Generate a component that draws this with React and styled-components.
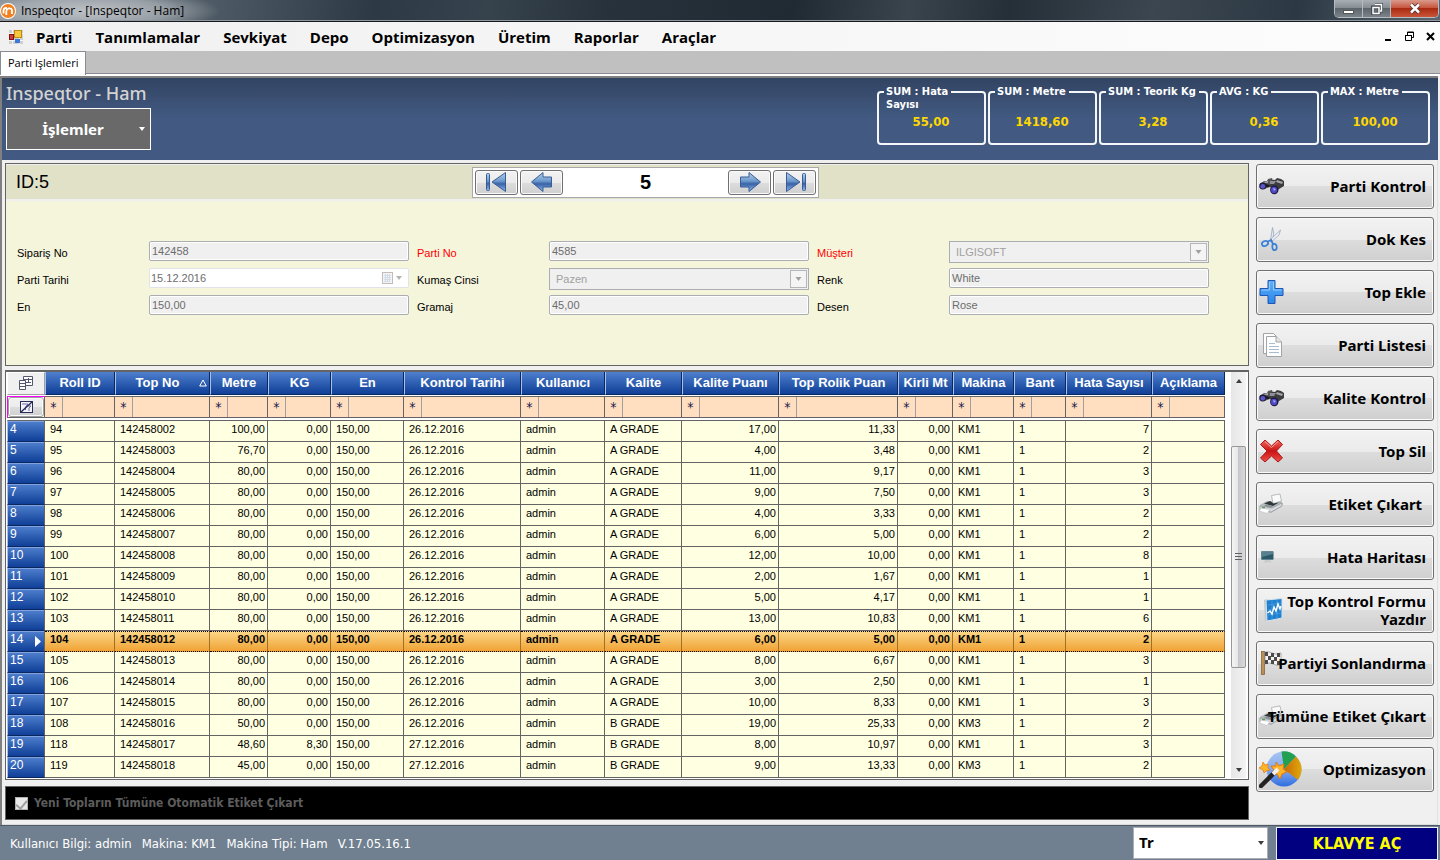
import React from 'react'
import styled, { createGlobalStyle, css } from 'styled-components'

const sans = '"Liberation Sans", Arial, sans-serif'
const tahoma = '"DejaVu Sans Condensed", Tahoma, "DejaVu Sans", sans-serif'
const segoe = '"Open Sans", "Segoe UI", sans-serif'
const noto = '"Noto Sans", Tahoma, sans-serif'

const GlobalStyle = createGlobalStyle`
    * { box-sizing: border-box; }
    body {
        margin: 0;
        background: #f0f0f0;
        font-family: ${sans};
        font-size: 11px;
        color: #000;
    }
    button, input, select { font: inherit; margin: 0; }
`

const raised = css`
    border: 1px solid #707070;
    border-radius: 3px;
    background: linear-gradient(#f2f2f2, #ebebeb 50%, #dddddd 50%, #cfcfcf);
    box-shadow: inset 0 0 0 1px #fafafa;
`

const Window = styled.div`
    min-height: 100vh;
    display: flex;
    flex-direction: column;
`

/* ---------- title bar ---------- */

const TitleBar = styled.header`
    height: 22px;
    display: flex;
    align-items: flex-start;
    justify-content: space-between;
    border-bottom: 1px solid #16191d;
    box-shadow: inset 0 -1px #8f979e;
    background:
        radial-gradient(ellipse 130px 22px at 90px 11px, rgba(205, 208, 210, 0.85), rgba(190, 195, 200, 0.6) 60%, transparent),
        linear-gradient(100deg, #7b858d 0%, #4a5661 16%, #2d3945 26%, #36424c 34%, #27323c 42%, #202a33 55%, #39444d 63%, #252f38 70%, #3b4650 80%, #2c3843 90%, #5a6670 100%);
`

const Caption = styled.div`
    display: flex;
    align-items: center;
    gap: 5px;
    height: 21px;
    font-family: ${segoe};
    font-size: 12px;
`

const WindowButtons = styled.div`
    display: flex;
    margin-right: 1px;
    border: 1px solid #b5bbc0;
    border-top: 0;
    border-radius: 0 0 5px 5px;
    overflow: hidden;
`

const WindowButton = styled.button`
    width: ${({ $wide }) => ($wide ? 47 : 28)}px;
    height: 17px;
    padding: 0;
    display: grid;
    place-items: center;
    border: 0;
    border-right: ${({ $wide }) => ($wide ? '0' : '1px solid #b5bbc0')};
    background: ${({ $wide }) => $wide
        ? 'linear-gradient(#d99a8c, #c8573f 45%, #a92a10 50%, #c9553a)'
        : 'linear-gradient(#a9afb4, #868d93 45%, #5d656c 50%, #7c848a)'};
`

/* ---------- menu and tabs ---------- */

const MenuBar = styled.nav`
    height: 29px;
    display: flex;
    align-items: center;
    padding: 0 5px 0 9px;
    background: linear-gradient(90deg, #f0f0f0, #fdfdfd);
`

const MenuItems = styled.div`
    flex: 1;
    display: flex;
    gap: 23px;
    margin-left: 13px;
`

const MenuItem = styled.a`
    color: #000;
    text-decoration: none;
    font-family: ${segoe};
    font-size: 15px;
    font-weight: 700;
    line-height: 24px;
`

const ChildButtons = styled.div`
    display: flex;
    gap: 12px;
`

const ChildButton = styled.button`
    border: 0;
    padding: 0;
    background: none;
    width: 9px;
    height: 11px;
`

const TabStrip = styled.div`
    height: 25px;
    background: linear-gradient(#c0c0c0 22px, #8b8b93 22px, #8b8b93 23px, #fff 23px);
`

const Tab = styled.button`
    height: 24px;
    padding: 0 7px 2px;
    border: 1px solid #8b8b93;
    border-bottom: 0;
    background: #fff;
    font-family: ${segoe};
    font-size: 11px;
`

const Frame = styled.div`
    flex: 1;
    border: solid #808080;
    border-width: 2px 0 0 2px;
    margin-right: 2px;
    display: flex;
    flex-direction: column;
`

/* ---------- blue header ---------- */

const Banner = styled.section`
    height: 82px;
    padding: 0 8px 0 4px;
    display: flex;
    justify-content: space-between;
    background: linear-gradient(#324462, #425a82 50%);
`

const Heading = styled.h1`
    margin: 3px 0 2px;
    color: #d3d3d3;
    font-family: ${noto};
    font-size: 18px;
    font-weight: 500;
    line-height: 25px;
`

const ActionsButton = styled.button`
    width: 145px;
    height: 42px;
    padding: 0 5px 0 0;
    display: flex;
    align-items: center;
    border: 1px solid #fff;
    background: #696969;
    color: #fff;
    font-family: ${noto};
    font-size: 15px;
    font-weight: 700;
    span { flex: 1; }
`

const Stats = styled.div`
    display: flex;
    gap: 2px;
    padding-top: 7px;
`

const Stat = styled.fieldset`
    width: 109px;
    height: 60px;
    margin: 0;
    padding: 0 0 0 5px;
    border: 2px solid #f4f6f8;
    border-radius: 4px;
    color: #fff;
    font-family: ${tahoma};
    font-weight: 700;
    font-size: 11px;
    legend {
        height: 13px;
        padding: 0 3px 0 2px;
        line-height: 13px;
        white-space: pre;
    }
`

const StatValue = styled.output`
    display: block;
    padding: 16px 6px 0 0;
    text-align: center;
    color: #ffd700;
    font-size: 13px;
    line-height: 16px;
`

/* ---------- workspace ---------- */

const Workspace = styled.div`
    flex: 1;
    display: grid;
    grid-template-columns: minmax(0, 1fr) 178px;
    gap: 7px;
    padding: 3px;
    border-right: 1px solid #e0e0e0;
    border-bottom: 1px solid #dcdcdc;
`

const Main = styled.main`
    display: flex;
    flex-direction: column;
`

const FormPanel = styled.section`
    height: 203px;
    border: 1px solid #646464;
    background: #f5f5dc;
`

const RecordBar = styled.div`
    height: 37px;
    display: grid;
    grid-template-columns: 466fr 347px 429fr;
    align-items: center;
    background: #e1e1c8;
    border: solid #f0f0f0;
    border-width: 1px 0 2px;
`

const RecordId = styled.h2`
    margin: 0;
    padding-left: 10px;
    font-size: 18px;
    font-weight: 400;
`

const Navigator = styled.div`
    height: 31px;
    padding: 2px;
    display: flex;
    gap: 2px;
    align-items: center;
    background: #fff;
    border: 1px solid #a9a9ab;
`

const NavButton = styled.button`
    ${raised}
    width: 43px;
    height: 25px;
    padding: 0;
    display: grid;
    place-items: center;
`

const NavPosition = styled.output`
    flex: 1;
    text-align: center;
    font-size: 20px;
    font-weight: 700;
`

const Fields = styled.div`
    display: grid;
    grid-template-columns: repeat(3, minmax(0, 1fr));
    column-gap: 8px;
    grid-auto-rows: 27px;
    padding: 40px 39px 0 11px;
`

const Field = styled.div`
    display: grid;
    grid-template-columns: 132px minmax(0, 1fr);
    align-items: start;
`

const FieldLabel = styled.label`
    padding-top: 5px;
    line-height: 15px;
    color: ${({ $required }) => ($required ? '#ff0000' : '#000')};
`

const TextBox = styled.input`
    width: 100%;
    height: 20px;
    padding: 0 2px 1px;
    border: 1px solid #abadb3;
    border-radius: 2px;
    background: #f0f0f0;
    box-shadow: inset 0 0 0 1px #fff;
    color: #6d6d6d;
`

const DateBox = styled.div`
    height: 20px;
    display: flex;
    align-items: center;
    gap: 2px;
    padding-right: 5px;
    border: 1px solid #e2e3ea;
    border-radius: 2px;
    background: #fff;
    input {
        flex: 1;
        min-width: 0;
        padding: 0 1px 1px;
        border: 0;
        background: none;
        color: #6d6d6d;
    }
`

const Combo = styled.div`
    height: 22px;
    display: flex;
    align-items: center;
    padding-right: 1px;
    border: 1px solid #abadb3;
    background: #f0f0f0;
    select {
        flex: 1;
        min-width: 0;
        appearance: none;
        padding: 0 6px;
        border: 0;
        background: none;
        color: #a0a0a0;
        opacity: 1;
    }
`

const ComboArrow = styled.span`
    width: 17px;
    height: 18px;
    display: grid;
    place-items: center;
    border: 1px solid #b4b6ba;
    background: #f4f4f4;
`

/* ---------- grid ---------- */

const GridPanel = styled.section`
    margin-top: 4px;
    display: grid;
    grid-template-columns: minmax(0, 1fr) 15px;
    column-gap: 6px;
    padding: 0 2px 1px 1px;
    border: 1px solid #646464;
    border-top-width: 2px;
    background: #fff;
`

const Table = styled.table`
    width: 100%;
    table-layout: fixed;
    border-collapse: separate;
    border-spacing: 0;
    th, td { padding: 0; }
`

const HeadCell = styled.th`
    height: 23px;
    border-left: 1px solid #a9c0ea;
    border-right: 1px solid #0b2760;
    border-bottom: 1px solid #0b2760;
    background: linear-gradient(#4f7fcd, #0f3f97);
    color: #fff;
    font-size: 13px;
    line-height: 20px;
    white-space: nowrap;
`

const HeadLabel = styled.span`
    display: flex;
    align-items: center;
    justify-content: center;
    span { flex: 1; }
    svg { margin-right: 2px; }
`

const CornerCell = styled.th`
    height: 23px;
    background: #f0f0f0;
    border: 1px solid #fff;
    border-right-color: #a0a0a0;
    border-bottom-color: #a0a0a0;
    svg { display: block; margin: auto; }
`

const FilterCell = styled.td`
    height: 25px;
    border: solid #fff;
    border-width: 1px 0 2px;
    background: #ffdfbf;
    box-shadow: inset -1px -1px #646464, inset 0 1px #646464;
    background-clip: padding-box;
`

const FilterBox = styled.div`
    display: flex;
    height: 20px;
    align-items: center;
    span {
        flex: none;
        width: 18px;
        height: 20px;
        line-height: 21px;
        text-align: center;
        color: #1c1c50;
        font-size: 14px;
        border-right: 1px solid #a0a0a0;
        font-family: ${tahoma};
    }
    input {
        flex: 1;
        min-width: 0;
        width: 0;
        border: 0;
        background: none;
    }
`

const FilterClear = styled.td`
    height: 25px;
    border: solid #fff;
    border-width: 1px 0 2px;
    box-shadow: inset 1px 1px #ff00ff, inset -1px -1px #646464;
    button {
        ${raised}
        display: grid;
        place-items: center;
        width: calc(100% - 2px);
        height: 20px;
        margin: 0 1px;
        padding: 0;
        border-color: #a0a0a0;
    }
`

const Row = styled.tr`
    height: 21px;
    &:first-child { height: 22px; }
    &:first-child > * { border-top: 1px solid #646464; }
    ${({ $current }) => $current && css`
        font-weight: 700;
        background: linear-gradient(#fbd88a, #f0a030);
        && > td {
            background: none;
            border-right-color: #a07028;
            border-top: 1px dotted #000;
            border-bottom: 1px dotted #000;
            padding-top: 0;
            line-height: 14px;
        }
    `}
`

const RowSelector = styled.th`
    vertical-align: top;
    text-align: left;
    font-weight: 400;
    font-size: 12px;
    line-height: 15px;
    color: #fff;
    border-bottom: 1px solid #0b2760;
    border-right: 1px solid #646464;
    border-left: 1px solid #a9c0ea;
    box-shadow: inset 0 1px #7fa3e0;
    background: linear-gradient(#4f7fcd, #0f3f97);
    div {
        display: flex;
        justify-content: space-between;
        padding: 1px 3px 0 2px;
    }
    svg { margin-top: 4px; }
`

const Cell = styled.td`
    height: 21px;
    vertical-align: top;
    line-height: 15px;
    white-space: nowrap;
    overflow: hidden;
    border-right: 1px solid #646464;
    border-bottom: 1px solid #646464;
    background: #ffffe1;
    text-align: ${({ $right }) => ($right ? 'right' : 'left')};
    && { padding: ${({ $right }) => ($right ? '1px 2px 0 0' : '1px 0 0 5px')}; }
`

const ScrollBar = styled.div`
    display: flex;
    flex-direction: column;
    background: linear-gradient(90deg, #e6e6e6, #f3f3f3);
`

const ScrollArrow = styled.button`
    height: 17px;
    border: 0;
    padding: 0;
    background: none;
    display: grid;
    place-items: center;
`

const ScrollThumb = styled.div`
    flex: 221;
    display: grid;
    place-items: center;
    border: 1px solid #979797;
    border-radius: 2px;
    background: linear-gradient(90deg, #f5f5f5, #e6e6e8 50%, #c8c8cc 50%, #dadadd);
`

const ScrollSpace = styled.div`
    flex: ${({ $size }) => $size};
`

const PrintBar = styled.label`
    margin-top: 6px;
    height: 34px;
    display: flex;
    align-items: center;
    gap: 6px;
    padding: 0 9px;
    border: 1px solid #646464;
    background: #000;
    color: #5c5c5c;
    font-family: ${tahoma};
    font-size: 12px;
    font-weight: 700;
`

const CheckBox = styled.input`
    appearance: none;
    width: 13px;
    height: 13px;
    display: grid;
    place-items: center;
    border: 1px solid #b1b1b1;
    background: #e9e9e9;
    &::after {
        content: '';
        width: 5px;
        height: 9px;
        margin-bottom: 2px;
        border: solid #a0a0a0;
        border-width: 0 2px 2px 0;
        transform: rotate(40deg);
    }
`

/* ---------- side buttons ---------- */

const Sidebar = styled.aside`
    display: flex;
    flex-direction: column;
    gap: 8px;
    padding-top: 1px;
`

const SideButton = styled.button`
    ${raised}
    height: 45px;
    padding: 0 7px 2px 2px;
    display: grid;
    align-items: center;
    svg {
        grid-area: 1 / 1;
        justify-self: start;
    }
    span {
        grid-area: 1 / 1;
        justify-self: end;
        white-space: pre;
        text-align: right;
        font-family: ${noto};
        font-size: 15px;
        font-weight: 700;
        line-height: 18px;
    }
`

/* ---------- status bar ---------- */

const StatusBar = styled.footer`
    height: 35px;
    display: flex;
    align-items: center;
    padding: 0 2px 0 10px;
    border-top: 1px solid #4f5a64;
    background: #708090;
    color: #fff;
    font-family: ${tahoma};
    font-size: 13px;
`

const StatusItems = styled.div`
    flex: 1;
    display: flex;
    gap: 10px;
`

const Language = styled.div`
    width: 135px;
    height: 32px;
    display: flex;
    align-items: center;
    margin-right: 8px;
    padding-right: 3px;
    border: 1px solid #abadb3;
    background: #fff;
    select {
        flex: 1;
        appearance: none;
        padding: 0 5px 2px;
        border: 0;
        background: none;
        color: #000;
        font-family: ${noto};
        font-size: 15px;
        font-weight: 700;
    }
`

const KeyboardButton = styled.button`
    width: 162px;
    height: 33px;
    padding: 0;
    border: 1px solid #f0f0f0;
    background: #000080;
    color: #ffff00;
    font-family: ${tahoma};
    font-size: 16px;
    font-weight: 700;
`

/* ---------- drawings ---------- */

const Caret = ({ color = '#3c3c3c', size = 5, up }) => (
    <svg width={size + 1} height="4" viewBox="0 0 6 4">
        <path d={up ? 'M0 4L3 0L6 4Z' : 'M0 0H6L3 4Z'} fill={color} />
    </svg>
)

const AppLogo = () => (
    <svg width="16" height="16" viewBox="0 0 16 16">
        <circle cx="8" cy="8" r="8" fill="#fff" />
        <circle cx="8" cy="8" r="7" fill="#f08020" />
        <path d="M3.5 10.5V8Q3.6 5 6 5H7M6.3 12V8.5Q6.5 6 8.5 5.5Q12 4.8 12 8V11" fill="none" stroke="#fff" strokeWidth="1.8" />
    </svg>
)

const FormIcon = () => (
    <svg width="14" height="14" viewBox="0 0 14 14">
        <rect width="14" height="14" fill="#cfcfcf" />
        <path d="M0 3.5H14M0 10.5H14M3.5 0V14M10.5 0V14" stroke="#f4f4f4" />
        <rect x="5.5" y="0.5" width="7" height="7" fill="#f7c83c" stroke="#c08a10" />
        <rect x="0.5" y="4.5" width="4" height="5" fill="#c84040" stroke="#8c1010" />
        <rect x="6" y="9" width="5" height="4" fill="#3e78d8" />
    </svg>
)

const Gradients = () => (
    <svg width="0" height="0" style={{ display: 'block' }}>
        <defs>
            <linearGradient id="navBlue" x1="0" y1="0" x2="0" y2="1">
                <stop offset="0" stopColor="#b4d0ec" />
                <stop offset="0.45" stopColor="#6c9acc" />
                <stop offset="0.6" stopColor="#3a62a8" />
                <stop offset="1" stopColor="#8fbcf0" />
            </linearGradient>
            <linearGradient id="plusBlue" x1="0" y1="0" x2="0" y2="1">
                <stop offset="0" stopColor="#5fb0f8" />
                <stop offset="1" stopColor="#2a86ea" />
            </linearGradient>
            <linearGradient id="crossRed" x1="0" y1="0" x2="0" y2="1">
                <stop offset="0" stopColor="#f06a60" />
                <stop offset="0.5" stopColor="#c81414" />
                <stop offset="1" stopColor="#ee5048" />
            </linearGradient>
            <linearGradient id="pieBlue" x1="0" y1="0" x2="0" y2="1">
                <stop offset="0" stopColor="#a8c4f0" />
                <stop offset="0.5" stopColor="#86aaf0" />
                <stop offset="1" stopColor="#2f6fe0" />
            </linearGradient>
            <linearGradient id="pieGold" x1="0" y1="0" x2="1" y2="0">
                <stop offset="0" stopColor="#c86a08" />
                <stop offset="1" stopColor="#e0a808" />
            </linearGradient>
        </defs>
    </svg>
)

const navShapes = {
    first: <><rect x="1.5" y="2.5" width="3" height="17" rx="1" /><path d="M7 11L20.5 1.5V20.5Z" /></>,
    prev: <path d="M1.5 11L13 1.5V6H21.5V16H13V20.5Z" />,
    next: <path d="M22.5 11L11 1.5V6H2.5V16H11V20.5Z" />,
    last: <><path d="M17 11L3.5 1.5V20.5Z" /><rect x="19.5" y="2.5" width="3" height="17" rx="1" /></>,
}

const NavIcon = ({ name }) => (
    <svg width="24" height="22" viewBox="0 0 24 22" fill="url(#navBlue)" stroke="#3a5c94" strokeWidth="1">
        {navShapes[name]}
    </svg>
)

const CalendarIcon = () => (
    <svg width="11" height="13" viewBox="0 0 11 13">
        <rect x="0.5" y="0.5" width="10" height="11" fill="#f4f4f4" stroke="#c4bcbc" />
        <path d="M2 3.5H9M2 5.5H9M2 7.5H9M2 9.5H7M3.5 2V10M5.5 2V10M7.5 2V10" stroke="#d4dce8" />
    </svg>
)

const ChooserIcon = () => (
    <svg width="16" height="15" viewBox="0 0 16 15" fill="#fff" stroke="#55556e">
        <path d="M5.5 0.5H14.5V9.5H5.5ZM5.5 3.5H14.5M8 6.5H13M10.5 2V7" />
        <path d="M1.5 4.5H7.5V13.5H1.5ZM1.5 7.5H7.5M1.5 10.5H7.5" />
    </svg>
)

const ClearFilterIcon = () => (
    <svg width="13" height="12" viewBox="0 0 13 12" fill="none" stroke="#2c2c5c">
        <rect x="0.5" y="0.5" width="12" height="11" fill="#f4f4fa" />
        <path d="M2 3H8L5.5 6V9M8 5H11L9 7V10" stroke="#6c6ca8" />
        <path d="M1 11L12 1" strokeWidth="1.5" />
    </svg>
)

const Binoculars = () => (
    <svg width="25" height="18" viewBox="0 0 25 18">
        <path d="M1 7L5 4L8 4L9 2L13 1L14 4L11 10L5 12Q0 10 1 7Z" fill="#55555a" />
        <path d="M11 5Q13 2 16 3L18 1L22 2L25 4L25 9L20 12L16 15L11 10Z" fill="#3c3c40" />
        <path d="M11 4L17 4L15 7L11 7Z" fill="#909094" />
        <path d="M18 3L24 5L23 7L17 5ZM4 5L9 4L9 6L6 6Z" fill="#a4a4a8" />
        <path d="M7 7L11 8L10 10L7 10Z" fill="#1c1c1e" />
        <ellipse cx="3.8" cy="9" rx="3.6" ry="3.4" fill="#1c1c3c" />
        <ellipse cx="3.8" cy="9.3" rx="2.4" ry="2.4" fill="#5c56c8" />
        <ellipse cx="15.3" cy="12.8" rx="4.2" ry="4.4" fill="#1a1a3a" />
        <ellipse cx="15" cy="13" rx="3" ry="3.2" fill="#5048c8" />
        <path d="M14 11L17 12L15 14Z" fill="#aaa6f4" />
    </svg>
)

const Scissors = () => (
    <svg width="25" height="26" viewBox="0 0 25 26" fill="none">
        <path d="M13.5 1.5L11.5 14L13.5 14L14.8 8Z" fill="#e4eaf2" stroke="#9aa8bc" strokeWidth="0.8" />
        <path d="M21.5 4L20 9L12 16L10.5 14.5Z" fill="#eef2f6" stroke="#9aa8bc" strokeWidth="0.8" />
        <ellipse cx="6" cy="17.5" rx="3.2" ry="2.4" stroke="#3a80d8" strokeWidth="1.7" transform="rotate(-25 6 17.5)" />
        <ellipse cx="15.5" cy="21" rx="2.2" ry="3.2" stroke="#3a80d8" strokeWidth="1.7" transform="rotate(-8 15.5 21)" />
        <path d="M9 15.5L12 14L14 18" stroke="#3a80d8" strokeWidth="1.8" />
    </svg>
)

const Plus = () => (
    <svg width="25" height="26" viewBox="0 0 25 26">
        <path d="M9 1.5H16V9.5H24V16.5H16V24.5H9V16.5H1V9.5H9Z" fill="url(#plusBlue)" stroke="#1f55b4" strokeLinejoin="round" />
        <path d="M10.5 3V11H2.5M14.5 3V11H22.5" stroke="#8ccbfb" fill="none" />
    </svg>
)

const Pages = () => (
    <svg width="25" height="26" viewBox="0 0 25 26" fill="#fdfdfd" stroke="#a0a4a8">
        <path d="M4.5 1.5H14.5L18 5V21.5H4.5Z" />
        <path d="M7.5 4.5H17L22.5 10V24.5H7.5Z" />
        <path d="M17 4.5V10H22.5" fill="#e4e4e4" />
        <path d="M10 11.5H16M10 14.5H20M10 17.5H20M10 20.5H20" stroke="#a8bcd0" />
    </svg>
)

const Cross = () => (
    <svg width="25" height="26" viewBox="0 0 25 26">
        <path d="M6 2L12.5 8L19 2L23.5 6.5L17.5 13L23.5 20L19 24L12.5 18L6 24L1.5 20L8 13L1.5 6.5Z" fill="url(#crossRed)" stroke="#b01818" strokeLinejoin="round" />
        <path d="M6 3.5L12.5 9.5L19 3.5" stroke="#f8a8a0" fill="none" />
    </svg>
)

const Printer = () => (
    <svg width="25" height="22" viewBox="0 0 25 22">
        <path d="M1 12L8 8L22 8L24 11L22 14L12 20L1 16Z" fill="#b4b9bc" />
        <path d="M12.5 2.5L21 1L22.5 8L14 10.5Z" fill="#fafafa" stroke="#a8acb0" strokeWidth="0.8" />
        <path d="M5 10.5L11 8L14.5 10.5L20 9.5L14 13Z" fill="#30383a" />
        <path d="M1 13L13 15L23 10V13L12 19L1 17Z" fill="#d8dcde" stroke="#888c90" strokeWidth="0.6" />
        <path d="M7 11.5L14 13L12 14.5L5 13Z" fill="#889094" />
        <path d="M2 15L11 16.5L8 20.5L0.5 18Z" fill="#fff" stroke="#b8bcc0" strokeWidth="0.6" />
        <rect x="3" y="14" width="3" height="1.2" fill="#58a058" />
    </svg>
)

const Monitor = () => (
    <svg width="25" height="26" viewBox="0 0 25 26">
        <rect x="2" y="7" width="12" height="9" fill="#9fb4bc" />
        <rect x="2.5" y="7.5" width="12" height="8" fill="#2c5868" />
        <path d="M3 8H14V10L3 13Z" fill="#58808e" />
        <path d="M6 16H11L13 18.5H4Z" fill="#c8ccce" />
    </svg>
)

const ChartSheet = () => (
    <svg width="25" height="26" viewBox="0 0 25 26">
        <path d="M5 3L8 2V23L6 25Z" fill="#c4c8ca" />
        <path d="M7 3L23 1.5V21L8 24Z" fill="#2080d0" stroke="#d8e4ec" />
        <path d="M9 8L22 6M9 13L22 11M9 18L22 16M13 3V23M18 3V22" stroke="#4aa0e4" strokeWidth="0.7" />
        <path d="M8.5 16L11 14L13 17L15 10L17 14L19 7L21 12L22 9" stroke="#fff" fill="none" strokeWidth="1.4" />
    </svg>
)

const Flag = () => (
    <svg width="25" height="26" viewBox="0 0 25 26">
        <rect x="2.5" y="1.5" width="3" height="23" fill="#b89058" stroke="#7c5c30" strokeWidth="0.7" />
        <path d="M6 2Q10 1 13 3T22 3V15Q18 16 14 14T6 14Z" fill="#f4f4f4" stroke="#909090" strokeWidth="0.7" />
        <path d="M6 2H9V6H6ZM12 3H15V7H12ZM18 3H21V7H18ZM9 6H12V10H9ZM15 7H18V11H15ZM6 10H9V14H6ZM12 10H15V14H12ZM18 11H21V15H18Z" fill="#4c4c4c" />
    </svg>
)

const PieWand = () => (
    <svg width="43" height="38" viewBox="0 0 43 38">
        <circle cx="25" cy="19" r="17.5" fill="url(#pieBlue)" />
        <path d="M25 19L22.5 1.5Q31 0.5 37 6.5Z" fill="#20a050" />
        <path d="M25 19L37 6.5Q47 17 39 30Z" fill="url(#pieGold)" />
        <path d="M17 12L20 16L25 14L24 19L28 22L23 24L21 29L18 24L12 24L15 20L12 16L17 16Z" fill="#ffb428" stroke="#e07808" />
        <path d="M4 12L6 15L9 14L9 18L11 20L7 21L5 23L4 20L0 18L3 16Z" fill="#ffb428" stroke="#e07808" strokeWidth="0.7" />
        <path d="M2 36L15 23" stroke="#222" strokeWidth="4.5" strokeLinecap="round" />
        <path d="M14 24L19 19" stroke="#f0f0f0" strokeWidth="4" />
    </svg>
)

/* ---------- data ---------- */

const menuItems = ['Parti', 'Tanımlamalar', 'Sevkiyat', 'Depo', 'Optimizasyon', 'Üretim', 'Raporlar', 'Araçlar']

const stats = [
    ['SUM : Hata\nSayısı', '55,00'],
    ['SUM : Metre', '1418,60'],
    ['SUM : Teorik Kg', '3,28'],
    ['AVG : KG', '0,36'],
    ['MAX : Metre', '100,00'],
]

const fields = [
    { id: 'siparis', label: 'Sipariş No', value: '142458' },
    { id: 'parti', label: 'Parti No', value: '4585', required: true },
    { id: 'musteri', label: 'Müşteri', value: 'ILGISOFT', required: true, type: 'combo' },
    { id: 'tarih', label: 'Parti Tarihi', value: '15.12.2016', type: 'date' },
    { id: 'kumas', label: 'Kumaş Cinsi', value: 'Pazen', type: 'combo' },
    { id: 'renk', label: 'Renk', value: 'White' },
    { id: 'en', label: 'En', value: '150,00' },
    { id: 'gramaj', label: 'Gramaj', value: '45,00' },
    { id: 'desen', label: 'Desen', value: 'Rose' },
]

const columns = [
    { title: 'Roll ID', width: 70 },
    { title: 'Top No', width: 95, sorted: true },
    { title: 'Metre', width: 58, right: true },
    { title: 'KG', width: 63, right: true },
    { title: 'En', width: 73 },
    { title: 'Kontrol Tarihi', width: 117 },
    { title: 'Kullanıcı', width: 84 },
    { title: 'Kalite', width: 77 },
    { title: 'Kalite Puanı', width: 97, right: true },
    { title: 'Top Rolik Puan', width: 119, right: true },
    { title: 'Kirli Mt', width: 55, right: true },
    { title: 'Makina', width: 61 },
    { title: 'Bant', width: 52 },
    { title: 'Hata Sayısı', width: 86, right: true },
    { title: 'Açıklama', width: 73 },
]

// no, roll, metre, kg, day, grade, points, rolik points, machine, faults
const rolls = [
    [4, 94, '100,00', '0,00', 26, 'A', '17,00', '11,33', 'KM1', 7],
    [5, 95, '76,70', '0,00', 26, 'A', '4,00', '3,48', 'KM1', 2],
    [6, 96, '80,00', '0,00', 26, 'A', '11,00', '9,17', 'KM1', 3],
    [7, 97, '80,00', '0,00', 26, 'A', '9,00', '7,50', 'KM1', 3],
    [8, 98, '80,00', '0,00', 26, 'A', '4,00', '3,33', 'KM1', 2],
    [9, 99, '80,00', '0,00', 26, 'A', '6,00', '5,00', 'KM1', 2],
    [10, 100, '80,00', '0,00', 26, 'A', '12,00', '10,00', 'KM1', 8],
    [11, 101, '80,00', '0,00', 26, 'A', '2,00', '1,67', 'KM1', 1],
    [12, 102, '80,00', '0,00', 26, 'A', '5,00', '4,17', 'KM1', 1],
    [13, 103, '80,00', '0,00', 26, 'A', '13,00', '10,83', 'KM1', 6],
    [14, 104, '80,00', '0,00', 26, 'A', '6,00', '5,00', 'KM1', 2],
    [15, 105, '80,00', '0,00', 26, 'A', '8,00', '6,67', 'KM1', 3],
    [16, 106, '80,00', '0,00', 26, 'A', '3,00', '2,50', 'KM1', 1],
    [17, 107, '80,00', '0,00', 26, 'A', '10,00', '8,33', 'KM1', 3],
    [18, 108, '50,00', '0,00', 26, 'B', '19,00', '25,33', 'KM3', 2],
    [19, 118, '48,60', '8,30', 27, 'B', '8,00', '10,97', 'KM1', 3],
    [20, 119, '45,00', '0,00', 27, 'B', '9,00', '13,33', 'KM3', 2],
]

const toCells = ([no, roll, metre, kg, day, grade, points, rolik, machine, faults]) => [
    roll, `142458${String(no - 2).padStart(3, '0')}`, metre, kg, '150,00', `${day}.12.2016`,
    'admin', `${grade} GRADE`, points, rolik, '0,00', machine, 1, faults, '',
]

const sideButtons = [
    ['Parti Kontrol', Binoculars],
    ['Dok Kes', Scissors],
    ['Top Ekle', Plus],
    ['Parti Listesi', Pages],
    ['Kalite Kontrol', Binoculars],
    ['Top Sil', Cross],
    ['Etiket Çıkart ', Printer],
    ['Hata Haritası', Monitor],
    ['Top Kontrol Formu\nYazdır', ChartSheet],
    ['Partiyi Sonlandırma', Flag],
    ['Tümüne Etiket Çıkart', Printer],
    ['Optimizasyon', PieWand],
]

const FieldControl = ({ field }) => {
    if (field.type === 'combo') {
        return (
            <Combo>
                <select id={field.id} disabled>
                    <option>{field.value}</option>
                </select>
                <ComboArrow><Caret color="#a0a0a0" size={6} /></ComboArrow>
            </Combo>
        )
    }
    if (field.type === 'date') {
        return (
            <DateBox>
                <input id={field.id} defaultValue={field.value} disabled />
                <CalendarIcon />
                <Caret color="#b4b4b4" size={7} />
            </DateBox>
        )
    }
    return <TextBox id={field.id} defaultValue={field.value} disabled />
}

const RollTable = () => (
    <Table>
        <colgroup>
            <col width="38" />
            {columns.map((col) => <col key={col.title} width={col.width} />)}
        </colgroup>
        <thead>
            <tr>
                <CornerCell><ChooserIcon /></CornerCell>
                {columns.map((col) => (
                    <HeadCell key={col.title}>
                        <HeadLabel>
                            <span>{col.title}</span>
                            {col.sorted && (
                                <svg width="8" height="8" viewBox="0 0 8 8">
                                    <path d="M4 1L7.3 7H0.7Z" fill="none" stroke="#fff" />
                                </svg>
                            )}
                        </HeadLabel>
                    </HeadCell>
                ))}
            </tr>
            <tr>
                <FilterClear>
                    <button aria-label="Filtreyi temizle"><ClearFilterIcon /></button>
                </FilterClear>
                {columns.map((col) => (
                    <FilterCell key={col.title}>
                        <FilterBox>
                            <span>*</span>
                            <input aria-label={col.title} />
                        </FilterBox>
                    </FilterCell>
                ))}
            </tr>
        </thead>
        <tbody>
            {rolls.map((roll) => (
                <Row key={roll[0]} $current={roll[0] === 14}>
                    <RowSelector>
                        <div>
                            {roll[0]}
                            {roll[0] === 14 && (
                                <svg width="6" height="11" viewBox="0 0 6 11"><path d="M0 0L6 5.5L0 11Z" fill="#fff" /></svg>
                            )}
                        </div>
                    </RowSelector>
                    {toCells(roll).map((value, i) => (
                        <Cell key={columns[i].title} $right={columns[i].right}>{value}</Cell>
                    ))}
                </Row>
            ))}
        </tbody>
    </Table>
)

const App = () => (
    <Window>
        <GlobalStyle />
        <Gradients />
        <TitleBar>
            <Caption><AppLogo />Inspeqtor - [Inspeqtor - Ham]</Caption>
            <WindowButtons>
                <WindowButton aria-label="Simge durumuna küçült">
                    <svg width="11" height="12" viewBox="0 0 11 12"><rect x="0.5" y="7.5" width="10" height="3" fill="#fff" stroke="#555" /></svg>
                </WindowButton>
                <WindowButton aria-label="Geri yükle">
                    <svg width="12" height="12" viewBox="0 0 12 12" fill="none">
                        <path d="M4 1H11V8H9M1.5 4H8V11H1.5Z" stroke="#444b52" strokeWidth="3" />
                        <path d="M4 1.5H10.5V8H9M2 4.5H8V10.5H2Z" stroke="#fff" strokeWidth="1.5" />
                    </svg>
                </WindowButton>
                <WindowButton $wide aria-label="Kapat">
                    <svg width="12" height="11" viewBox="0 0 12 11">
                        <path d="M2 1.5L10 9.5M10 1.5L2 9.5" stroke="#4c3030" strokeWidth="4" />
                        <path d="M2 1.5L10 9.5M10 1.5L2 9.5" stroke="#fff" strokeWidth="2.5" />
                    </svg>
                </WindowButton>
            </WindowButtons>
        </TitleBar>
        <MenuBar>
            <FormIcon />
            <MenuItems>
                {menuItems.map((item) => <MenuItem key={item} href="#">{item}</MenuItem>)}
            </MenuItems>
            <ChildButtons>
                <ChildButton aria-label="Küçült"><svg width="9" height="11" viewBox="0 0 9 11"><rect x="1" y="8" width="6" height="2" /></svg></ChildButton>
                <ChildButton aria-label="Önceki boyut">
                    <svg width="9" height="11" viewBox="0 0 9 11" fill="none" stroke="#000">
                        <path d="M2.5 4V1H8.5V6.5H6.5M2 1.5H9M0.5 4V9.5H6.5V4M0 4.5H7" />
                    </svg>
                </ChildButton>
                <ChildButton aria-label="Pencereyi kapat"><svg width="9" height="11" viewBox="0 0 9 11"><path d="M1 2L8 9M8 2L1 9" stroke="#000" strokeWidth="2" /></svg></ChildButton>
            </ChildButtons>
        </MenuBar>
        <TabStrip><Tab>Parti Işlemleri</Tab></TabStrip>
        <Frame>
            <Banner>
                <div>
                    <Heading>Inspeqtor - Ham</Heading>
                    <ActionsButton><span>İşlemler</span><Caret color="#fff" size={5} /></ActionsButton>
                </div>
                <Stats>
                    {stats.map(([label, value]) => (
                        <Stat key={label}>
                            <legend>{label}</legend>
                            <StatValue>{value}</StatValue>
                        </Stat>
                    ))}
                </Stats>
            </Banner>
            <Workspace>
                <Main>
                    <FormPanel>
                        <RecordBar>
                            <RecordId>ID:5</RecordId>
                            <Navigator>
                                <NavButton aria-label="İlk"><NavIcon name="first" /></NavButton>
                                <NavButton aria-label="Önceki"><NavIcon name="prev" /></NavButton>
                                <NavPosition>5</NavPosition>
                                <NavButton aria-label="Sonraki"><NavIcon name="next" /></NavButton>
                                <NavButton aria-label="Son"><NavIcon name="last" /></NavButton>
                            </Navigator>
                        </RecordBar>
                        <Fields>
                            {fields.map((field) => (
                                <Field key={field.id}>
                                    <FieldLabel htmlFor={field.id} $required={field.required}>{field.label}</FieldLabel>
                                    <FieldControl field={field} />
                                </Field>
                            ))}
                        </Fields>
                    </FormPanel>
                    <GridPanel>
                        <RollTable />
                        <ScrollBar>
                            <ScrollArrow aria-label="Yukarı"><Caret up size={5} /></ScrollArrow>
                            <ScrollSpace $size={57} />
                            <ScrollThumb>
                                <svg width="7" height="8" viewBox="0 0 7 8"><path d="M0 0.5H7M0 3.5H7M0 6.5H7" stroke="#606060" /></svg>
                            </ScrollThumb>
                            <ScrollSpace $size={94} />
                            <ScrollArrow aria-label="Aşağı"><Caret size={5} /></ScrollArrow>
                        </ScrollBar>
                    </GridPanel>
                    <PrintBar>
                        <CheckBox type="checkbox" defaultChecked disabled />
                        Yeni Topların Tümüne Otomatik Etiket Çıkart
                    </PrintBar>
                </Main>
                <Sidebar>
                    {sideButtons.map(([label, Icon]) => (
                        <SideButton key={label}><Icon /><span>{label}</span></SideButton>
                    ))}
                </Sidebar>
            </Workspace>
        </Frame>
        <StatusBar>
            <StatusItems>
                <span>Kullanıcı Bilgi: admin</span>
                <span>Makina: KM1</span>
                <span>Makina Tipi: Ham</span>
                <span>V.17.05.16.1</span>
            </StatusItems>
            <Language>
                <select aria-label="Dil"><option>Tr</option></select>
                <Caret size={5} />
            </Language>
            <KeyboardButton>KLAVYE AÇ</KeyboardButton>
        </StatusBar>
    </Window>
)

export default App
